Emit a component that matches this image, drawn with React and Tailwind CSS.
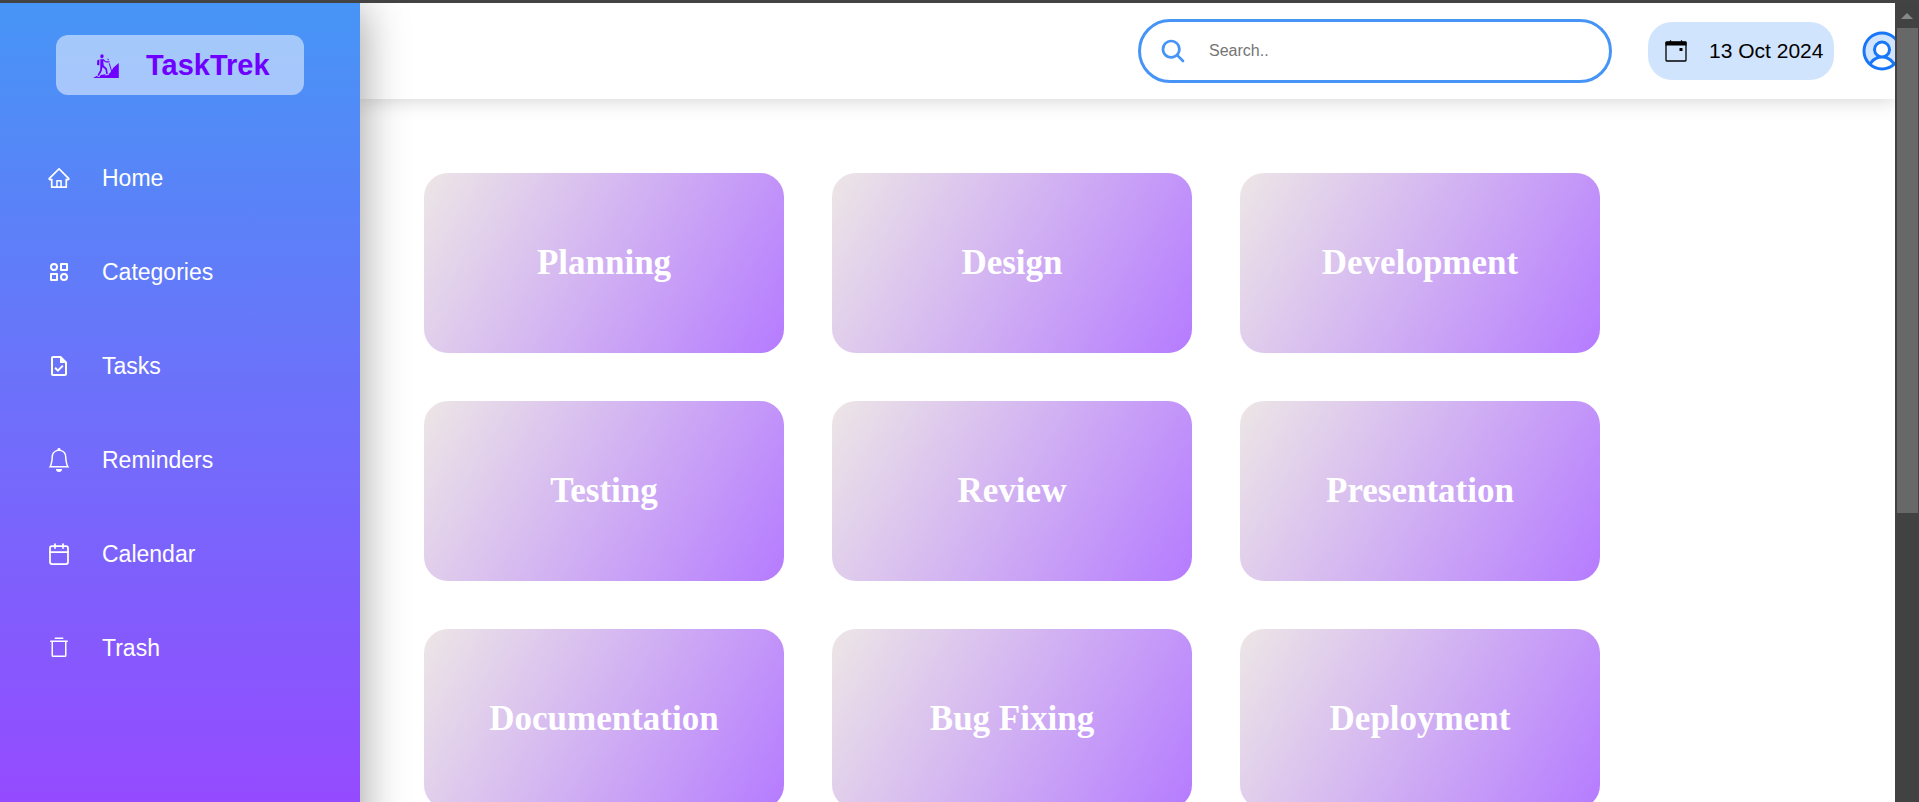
import React from 'react'
import { GiHiking } from 'react-icons/gi'
import { AiOutlineHome } from 'react-icons/ai'
import { TbCategory2 } from 'react-icons/tb'
import { MdOutlineTask } from 'react-icons/md'
import { BsBell } from 'react-icons/bs'
import { FiCalendar } from 'react-icons/fi'
import { PiTrashSimple, PiUserCircleDuotone } from 'react-icons/pi'
import { IoSearch } from 'react-icons/io5'

const navItems = [
  { label: 'Home', icon: <AiOutlineHome size={24} /> },
  { label: 'Categories', icon: <TbCategory2 size={24} /> },
  { label: 'Tasks', icon: <MdOutlineTask size={24} /> },
  { label: 'Reminders', icon: <BsBell size={24} /> },
  { label: 'Calendar', icon: <FiCalendar size={24} strokeWidth={1.75} /> },
  { label: 'Trash', icon: <PiTrashSimple size={24} /> },
]

const categories = [
  'Planning',
  'Design',
  'Development',
  'Testing',
  'Review',
  'Presentation',
  'Documentation',
  'Bug Fixing',
  'Deployment',
]

function DateIcon() {
  return (
    <svg width="22" height="22" viewBox="0 0 22 22" aria-hidden="true">
      <rect x="1" y="2" width="20" height="19" rx="0.8" fill="none" stroke="#000" strokeWidth="1.3" />
      <rect x="0.5" y="1.8" width="21" height="3.7" />
      <path d="M5.5 0.3v2M16.5 0.3v2" stroke="#000" strokeWidth="1.2" />
      <rect x="14.5" y="8" width="3" height="3" />
    </svg>
  )
}

function Sidebar() {
  return (
    <aside className="relative z-10 -mb-12 w-90 shrink-0 bg-[linear-gradient(#4695f6,#954bff_94%)] shadow-[4px_4px_40px_rgba(0,0,0,0.35)]">
      <div className="mx-14 mt-8 flex h-15 items-center gap-[26px] rounded-xl bg-white/50 pl-9 text-[#6f00ff]">
        <GiHiking size={28} />
        <span className="pt-0.5 text-[29px] font-bold">TaskTrek</span>
      </div>
      <nav className="mt-9">
        {navItems.map(({ label, icon }) => (
          <a key={label} href="#" className="flex h-[94px] items-center gap-[31px] pl-[47px] text-[23px] text-white">
            {icon}
            {label}
          </a>
        ))}
      </nav>
    </aside>
  )
}

function Header() {
  return (
    <header className="relative flex h-24 shrink-0 items-center justify-end bg-white shadow-[0_0_20px_rgba(0,0,0,0.2)]">
      <label className="mr-9 flex h-16 w-[474px] items-center gap-[22px] rounded-full border-3 border-[#4695f6] pl-[18px]">
        <IoSearch size={28} className="shrink-0 text-[#4695f6]" />
        <input
          type="text"
          aria-label="Search"
          placeholder="Search.."
          className="min-w-0 flex-1 bg-transparent text-base outline-none placeholder:text-[#757575]"
        />
      </label>
      <div className="mr-6 flex h-[58px] w-[186px] items-center gap-[22px] rounded-3xl bg-[#d1e4fd] pl-[17px] text-[21px] whitespace-nowrap text-black">
        <DateIcon />
        13 Oct 2024
      </div>
      <button type="button" aria-label="Account" className="-mr-[11px] shrink-0 text-[#1877f8]">
        <PiUserCircleDuotone size={48} />
      </button>
    </header>
  )
}

function ScrollRail() {
  return (
    <div className="flex w-6 shrink-0 flex-col items-center bg-[#424242]" aria-hidden="true">
      <div className="flex h-[25px] items-center justify-center">
        <svg width="12" height="6" viewBox="0 0 12 6">
          <path d="M6 0l6 6H0z" fill="#888" />
        </svg>
      </div>
      <div className="h-[485px] w-[21px] bg-[#686868]" />
    </div>
  )
}

export default function App() {
  return (
    <div className="flex h-screen flex-col overflow-hidden bg-white font-['Liberation_Sans',Arial,sans-serif]">
      <div className="h-[3px] shrink-0 bg-[#434343]" />
      <div className="flex min-h-0 flex-1">
        <div className="flex min-w-0 flex-1 overflow-hidden">
          <Sidebar />
          <div className="flex min-w-0 flex-1 flex-col">
            <Header />
            <main className="flex flex-wrap gap-12 px-16 pt-[74px]">
              {categories.map((name) => (
                <section
                  key={name}
                  className="flex h-45 w-90 items-center justify-center rounded-3xl bg-[linear-gradient(120deg,#ede6e6,#b57bff)]"
                >
                  <h2 className="font-['Liberation_Serif','Times_New_Roman',serif] text-[35px] font-bold text-white">{name}</h2>
                </section>
              ))}
            </main>
          </div>
        </div>
        <ScrollRail />
      </div>
    </div>
  )
}
